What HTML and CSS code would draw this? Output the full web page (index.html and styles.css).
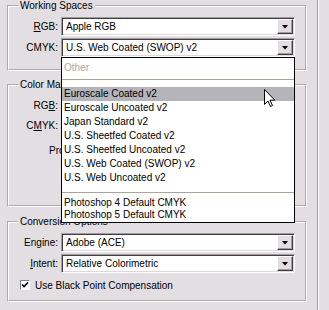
FILE: index.html
```html
<!DOCTYPE html>
<html lang="en">
<head>
  <meta charset="UTF-8" />
  <title>Color Settings</title>
  <link rel="stylesheet" href="styles.css">
</head>
<body>
  <div class="dialog">
    <div class="settings">
      <fieldset class="group working">
        <legend>Working Spaces</legend>
        <div class="row">
          <label><u>R</u>GB:</label>
          <div class="select">Apple RGB<span class="btn"></span></div>
        </div>
        <div class="row">
          <label>CMYK:</label>
          <div class="select">U.S. Web Coated (SWOP) v2<span class="btn"></span></div>
        </div>
      </fieldset>

      <fieldset class="group policies">
        <legend>Color Management Policies</legend>
        <div class="row">
          <label>RG<u>B</u>:</label>
          <div class="select"><span class="btn"></span></div>
        </div>
        <div class="row">
          <label>C<u>M</u>YK:</label>
          <div class="select"><span class="btn"></span></div>
        </div>
        <div class="mismatch">Profile Mismatches:</div>
      </fieldset>

      <fieldset class="group conversion">
        <legend>Conversion Options</legend>
        <div class="row">
          <label>En<u>g</u>ine:</label>
          <div class="select">Adobe (ACE)<span class="btn"></span></div>
        </div>
        <div class="row">
          <label><u>I</u>ntent:</label>
          <div class="select">Relative Colorimetric<span class="btn"></span></div>
        </div>
        <div class="check-row">
          <span class="checkbox">
            <svg width="8" height="8" viewBox="0 0 8 8"><path d="M1 3.5 L3 5.5 L7 1.5" fill="none" stroke="#000" stroke-width="1.6"/></svg>
          </span>
          <span>Use Black Point Compensation</span>
        </div>
      </fieldset>

      <!-- open CMYK menu -->
      <div class="list">
        <div class="item other">Other</div>
        <div class="sep"></div>
        <div class="item active">Euroscale Coated v2</div>
        <div class="item">Euroscale Uncoated v2</div>
        <div class="item">Japan Standard v2</div>
        <div class="item">U.S. Sheetfed Coated v2</div>
        <div class="item">U.S. Sheetfed Uncoated v2</div>
        <div class="item">U.S. Web Coated (SWOP) v2</div>
        <div class="item">U.S. Web Uncoated v2</div>
        <div class="sep lower"></div>
        <div class="item small">Photoshop 4 Default CMYK</div>
        <div class="item small">Photoshop 5 Default CMYK</div>
      </div>

      <svg class="cursor" width="12" height="19" viewBox="0 0 12 19">
        <path d="M0.5 0.5 L0.5 15.5 L4 12 L6.5 17.5 L8.5 16.5 L6 11.2 L10.8 11.2 Z" fill="#fff" stroke="#000" stroke-width="1"/>
      </svg>
    </div>
    <div class="divider"></div>
  </div>
</body>
</html>
```

FILE: styles.css
```css
body {
  margin: 0;
  background-color: #e2dee2;
  font-family: "Liberation Sans", Arial, sans-serif;
  font-size: 10px;
  color: #000;
}

.dialog {
  display: flex;
  height: 310px;
}

.settings {
  position: relative;
  width: 300px;
  padding-left: 7px;
}

.divider {
  margin-left: 10px;
  border-left: 1px solid #a09ca0;
  border-right: 1px solid #fff;
}

.group {
  margin: 0;
  padding: 5px 10px 12px 0;
  border: 2px groove #fff;
  min-width: 0;
}

.group legend {
  line-height: 12px;
  padding: 0 2px;
  margin-left: 9px;
}

.policies {
  margin-top: 8px;
  padding-bottom: 45px;
}

.conversion {
  margin-top: 9px;
  padding-bottom: 8px;
}

.row {
  display: flex;
  align-items: center;
  gap: 3px;
}

.working .row + .row,
.conversion .row + .row {
  margin-top: 2px;
}

.policies .row + .row {
  margin-top: 1px;
}

.row label {
  width: 49px;
  text-align: right;
}

.select {
  display: flex;
  align-items: center;
  width: 234px;
  height: 19px;
  box-sizing: border-box;
  padding-left: 4px;
  background-color: #fff;
  border: 1px solid;
  border-color: #a09ca0 #fff #fff #a09ca0;
  box-shadow: inset 1px 1px 0 #404040, inset -1px -1px 0 #dcd8dc;
  white-space: nowrap;
}

.btn {
  margin-left: auto;
  margin-right: 1px;
  width: 16px;
  height: 15px;
  box-sizing: border-box;
  display: flex;
  align-items: center;
  justify-content: center;
  background-color: #e2dee2;
  border: 1px solid;
  border-color: #fff #404040 #404040 #fff;
  box-shadow: inset -1px -1px 0 #a09ca0;
}

.btn::after {
  content: "";
  width: 7px;
  height: 4px;
  background-color: #000;
  clip-path: polygon(0 0, 100% 0, 50% 100%);
}

.mismatch {
  margin-top: 6px;
  margin-left: 40px;
  width: 12px;
  height: 19px;
  line-height: 19px;
  white-space: nowrap;
  overflow: hidden;
}

.check-row {
  display: flex;
  align-items: center;
  gap: 5px;
  height: 14px;
  margin-top: 5px;
  padding-left: 11px;
}

.checkbox {
  width: 10px;
  height: 10px;
  box-sizing: border-box;
  display: flex;
  align-items: center;
  justify-content: center;
  background-color: #fff;
  border: 1px solid;
  border-color: #808080 #fff #fff #808080;
}

.list {
  position: absolute;
  left: 61px;
  top: 57px;
  width: 234px;
  height: 166px;
  box-sizing: border-box;
  border: 1px solid #000;
  background-color: #fff;
  z-index: 1;
}

.item {
  height: 14px;
  line-height: 14px;
  padding-left: 2px;
  white-space: nowrap;
  overflow: hidden;
}

.item.other {
  color: #a8a8a8;
  height: 20px;
  line-height: 20px;
}

.item.active {
  background-color: #b4b4ba;
}

.item.small {
  height: 12px;
  line-height: 12px;
}

.sep {
  height: 1px;
  margin: 1px 0 7px;
  background-color: #a8a49e;
}

.sep.lower {
  margin: 7px 0 4px;
}

.cursor {
  position: absolute;
  left: 264px;
  top: 89px;
  z-index: 2;
}
```
